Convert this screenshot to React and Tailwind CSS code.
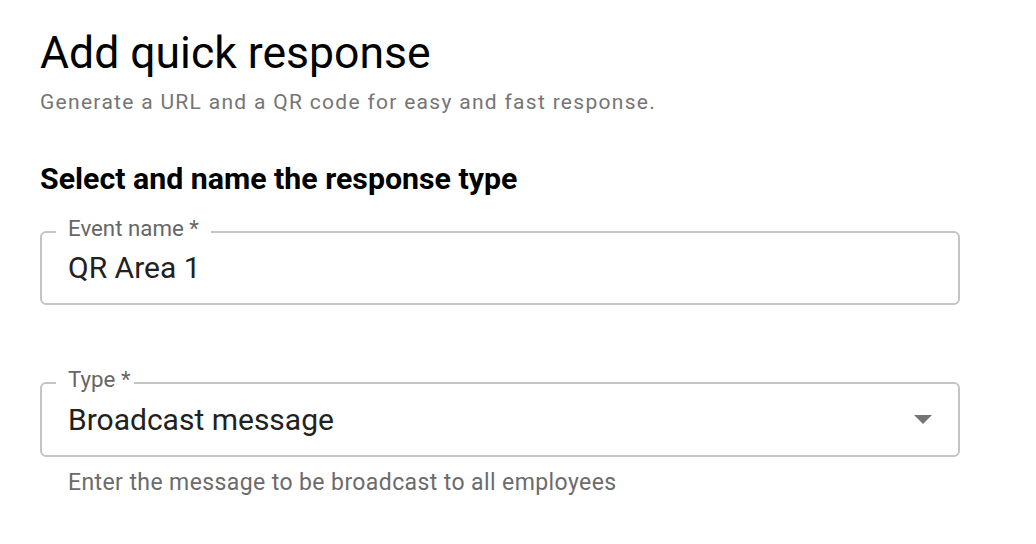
export default function App() {
  return (
    <div className="min-h-screen bg-white font-['Roboto',sans-serif] px-10 pt-[27px]">
      <h1 className="text-[44.5px] leading-[52px] text-black">Add quick response</h1>
      <p className="mt-[11px] text-[21px] leading-6 tracking-[1.3px] text-[#757575]">
        Generate a URL and a QR code for easy and fast response.
      </p>

      <h2 className="mt-[47px] text-[30.3px] leading-9 font-bold text-black">
        Select and name the response type
      </h2>

      <div className="w-[920px] mt-[34px]">
        <div className="relative h-[74px] border-2 border-[#c4c4c4] rounded-md flex items-center px-[26px]">
          <span className="absolute left-[14px] top-[-17px] bg-white pl-[12px] pr-[12px] text-[22.3px] leading-6 text-[#666666]">
            Event name *
          </span>
          <span className="text-[30px] leading-9 text-[#212121]">QR Area 1</span>
        </div>

        <div className="relative mt-[77px] h-[75px] border-2 border-[#c4c4c4] rounded-md flex items-center justify-between pl-[26px] pr-[26px]">
          <span className="absolute left-[14px] top-[-17px] bg-white pl-[12px] pr-[3px] text-[22.3px] leading-6 text-[#666666]">
            Type *
          </span>
          <span className="text-[30px] leading-9 text-[#212121]">Broadcast message</span>
          <svg width="18" height="9" viewBox="0 0 18 9">
            <path d="M0 0 L18 0 L9 9 Z" fill="#757575" />
          </svg>
        </div>

        <p className="mt-[12px] pl-[28px] text-[23px] leading-7 tracking-[0.4px] text-[#6b6b6b]">
          Enter the message to be broadcast to all employees
        </p>
      </div>
    </div>
  );
}
